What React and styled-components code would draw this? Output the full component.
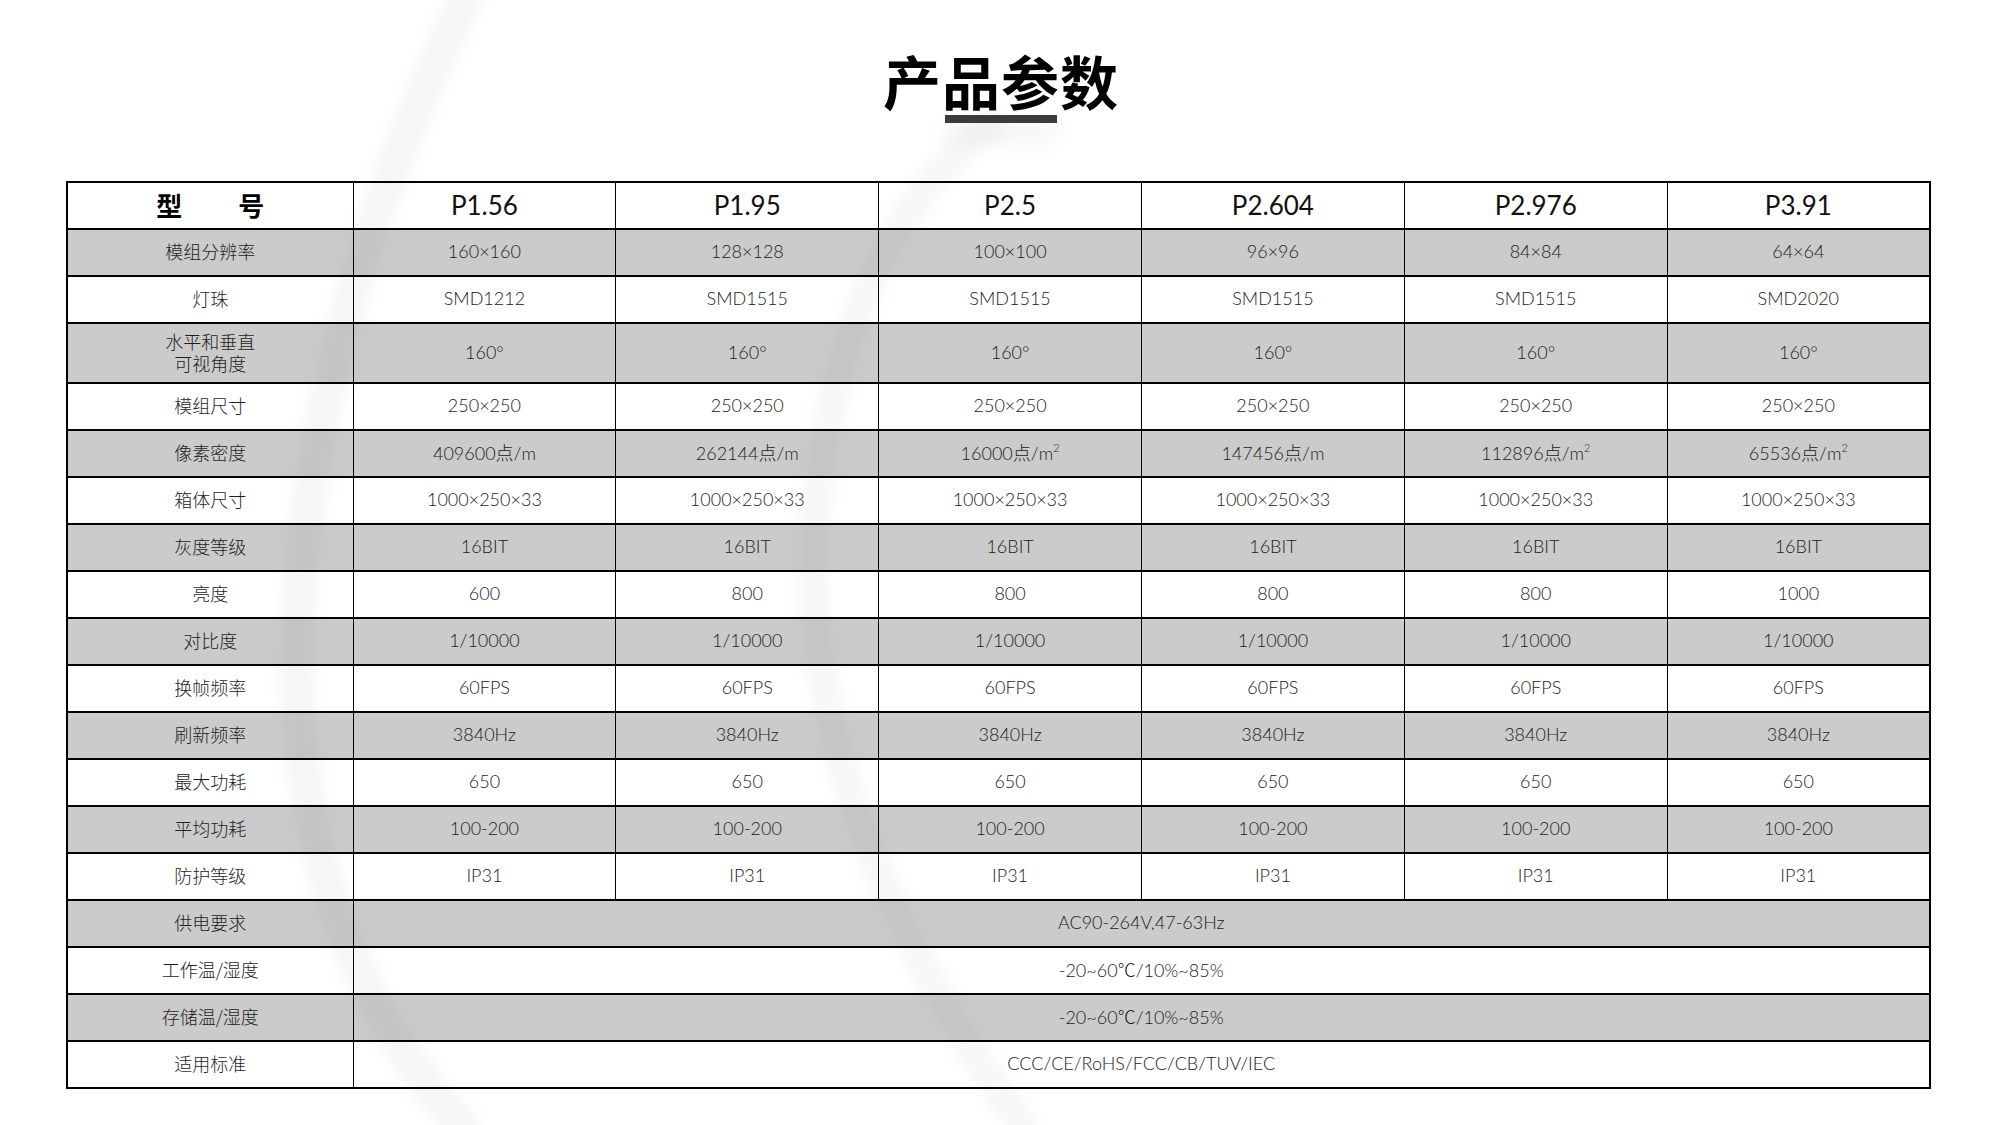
import React from 'react';
import styled, { createGlobalStyle } from 'styled-components';

const GlobalStyle = createGlobalStyle`
  html, body {
    margin: 0;
    padding: 0;
    background: #fff;
  }
  body {
    font-family: Lato, "Noto Sans CJK SC", sans-serif;
  }
`;

const models = ['P1.56', 'P1.95', 'P2.5', 'P2.604', 'P2.976', 'P3.91'];

const sq = <sup>2</sup>;

const rows = [
  { label: '模组分辨率', values: ['160×160', '128×128', '100×100', '96×96', '84×84', '64×64'] },
  { label: '灯珠', values: ['SMD1212', 'SMD1515', 'SMD1515', 'SMD1515', 'SMD1515', 'SMD2020'] },
  { label: ['水平和垂直', '可视角度'], values: Array(6).fill('160°'), tall: true },
  { label: '模组尺寸', values: Array(6).fill('250×250') },
  {
    label: '像素密度',
    values: [
      '409600点/m',
      '262144点/m',
      <>16000点/m{sq}</>,
      '147456点/m',
      <>112896点/m{sq}</>,
      <>65536点/m{sq}</>,
    ],
  },
  { label: '箱体尺寸', values: Array(6).fill('1000×250×33') },
  { label: '灰度等级', values: Array(6).fill('16BIT') },
  { label: '亮度', values: ['600', '800', '800', '800', '800', '1000'] },
  { label: '对比度', values: Array(6).fill('1/10000') },
  { label: '换帧频率', values: Array(6).fill('60FPS') },
  { label: '刷新频率', values: Array(6).fill('3840Hz') },
  { label: '最大功耗', values: Array(6).fill('650') },
  { label: '平均功耗', values: Array(6).fill('100-200') },
  { label: '防护等级', values: Array(6).fill('IP31') },
  { label: '供电要求', span: 'AC90-264V,47-63Hz' },
  { label: '工作温/湿度', span: '-20~60℃/10%~85%' },
  { label: '存储温/湿度', span: '-20~60℃/10%~85%' },
  { label: '适用标准', span: 'CCC/CE/RoHS/FCC/CB/TUV/IEC' },
];

// faint grey swoosh drawn over the page, like the watermark in the original
const Swoosh = () => (
  <Backdrop viewBox="0 0 2000 1125" preserveAspectRatio="none">
    <defs>
      <filter id="soft" x="-20%" y="-20%" width="140%" height="140%">
        <feGaussianBlur stdDeviation="7" />
      </filter>
    </defs>
    <g filter="url(#soft)" fill="none" stroke="#000">
      <path
        d="M 470 -10 C 355 220, 290 480, 298 700 C 306 900, 380 1040, 470 1135"
        strokeOpacity="0.035"
        strokeWidth="34"
      />
      <path
        d="M 1000 118 C 895 190, 830 330, 815 520 C 800 740, 900 960, 1030 1135"
        strokeOpacity="0.03"
        strokeWidth="30"
      />
    </g>
  </Backdrop>
);

const App = () => {
  return (
    <Page>
      <GlobalStyle />
      <Swoosh />
      <Content>
        <TitleBlock>
          <Title>产品参数</Title>
          <TitleBar />
        </TitleBlock>

        <SpecTable>
          <colgroup>
            <col style={{ width: 286 }} />
            {models.map(m => (
              <col key={m} />
            ))}
          </colgroup>
          <tbody>
            <HeadRow>
              <HeadLabel>
                <span>型</span>
                <span>号</span>
              </HeadLabel>
              {models.map(m => (
                <HeadCell key={m}>{m}</HeadCell>
              ))}
            </HeadRow>
            {rows.map((row, i) => (
              <Row key={i} shaded={i % 2 === 0} tall={row.tall}>
                <LabelCell>
                  {Array.isArray(row.label)
                    ? row.label.map(l => <div key={l}>{l}</div>)
                    : row.label}
                </LabelCell>
                {row.span ? (
                  <Cell colSpan={6}>{row.span}</Cell>
                ) : (
                  row.values.map((v, j) => <Cell key={j}>{v}</Cell>)
                )}
              </Row>
            ))}
          </tbody>
        </SpecTable>
      </Content>
    </Page>
  );
};

const Page = styled.div`
  position: relative;
  width: 2000px;
  height: 1125px;
  overflow: hidden;
  background: #fff;
`;

const Backdrop = styled.svg`
  position: absolute;
  left: 0;
  top: 0;
  width: 2000px;
  height: 1125px;
  pointer-events: none;
  z-index: 2;
`;

const Content = styled.div`
  position: relative;
  z-index: 1;
  display: flex;
  flex-direction: column;
  padding-top: 48px;
`;

const TitleBlock = styled.div`
  display: flex;
  flex-direction: column;
  align-items: center;
  margin-left: 2px;
`;

const Title = styled.h1`
  margin: 0;
  font-family: "Noto Sans CJK SC", sans-serif;
  font-weight: 700;
  font-size: 58px;
  line-height: 64px;
  letter-spacing: 1px;
  color: #000;
`;

const TitleBar = styled.div`
  width: 112px;
  height: 8px;
  margin-top: 3px;
  background: #3c3c3c;
  box-shadow: 0 14px 22px rgba(0, 0, 0, 0.1);
`;

const SpecTable = styled.table`
  margin: 58px 0 0 66px;
  width: 1865px;
  table-layout: fixed;
  border-collapse: collapse;
  border: 2px solid #000;
`;

const HeadRow = styled.tr`
  height: 47px;
  background: #fff;
`;

const Row = styled.tr`
  height: ${p => (p.tall ? '60px' : '47px')};
  background: ${p => (p.shaded ? '#cbcbcb' : '#fff')};
`;

const BaseCell = styled.td`
  padding: 0 0 3px;
  text-align: center;
  vertical-align: middle;
  border-top: 2px solid #000;
  border-bottom: 2px solid #000;
  border-left: 1px solid #000;
  border-right: 1px solid #000;
`;

const HeadLabel = styled(BaseCell)`
  font-family: "Noto Sans CJK SC", sans-serif;
  font-weight: 700;
  font-size: 26px;
  color: #000;

  span + span {
    margin-left: 56px;
  }
`;

const HeadCell = styled(BaseCell)`
  font-family: Lato, "Noto Sans CJK SC", sans-serif;
  font-weight: 400;
  font-size: 26px;
  color: #111;
  padding-top: 2px;
`;

const LabelCell = styled(BaseCell)`
  font-family: "Noto Sans CJK SC", sans-serif;
  font-weight: 300;
  font-size: 18px;
  line-height: 22px;
  color: #1e1e1e;
`;

const Cell = styled(BaseCell)`
  font-family: Lato, "Noto Sans CJK SC", sans-serif;
  font-weight: 300;
  font-size: 18px;
  color: #222;

  sup {
    font-size: 11px;
    vertical-align: 8px;
    line-height: 0;
  }
`;

export default App;
